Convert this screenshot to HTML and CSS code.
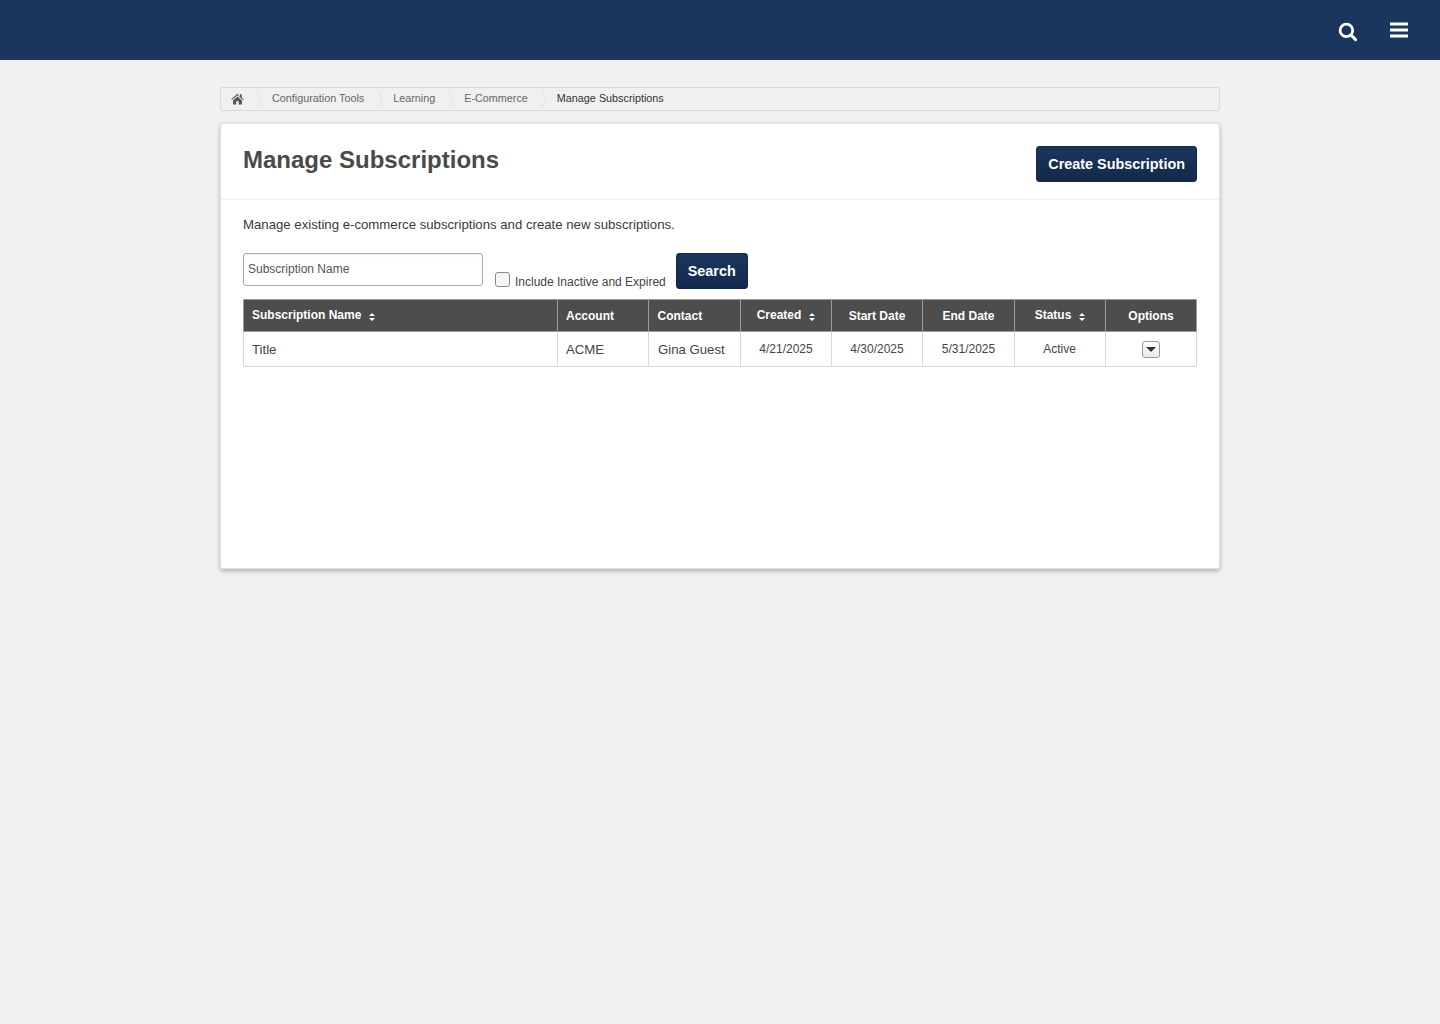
FILE: index.html
```html
<!DOCTYPE html>
<html lang="en">
<head>
<meta charset="utf-8">
<title>Manage Subscriptions</title>
<link rel="stylesheet" href="styles.css">
</head>
<body>
<header class="topbar">
  <svg class="icon-search" viewBox="0 0 20 20" width="20" height="20" aria-label="Search"><circle cx="8.4" cy="8.4" r="6.3" fill="none" stroke="#fff" stroke-width="2.8"/><path d="M13 13L17.6 17.6" stroke="#fff" stroke-width="3" stroke-linecap="round"/></svg>
  <svg class="icon-menu" viewBox="0 0 18 16" width="18" height="16" aria-label="Menu"><path d="M0 0.5h18v3H0zM0 6.5h18v3H0zM0 12.5h18v3H0z" fill="#fff"/></svg>
</header>
<div class="wrapper">
  <nav class="breadcrumb">
    <span class="crumb crumb-home"><svg viewBox="0 0 14 12" width="13" height="12" aria-label="Home"><path d="M7 0.3L0.2 6.3l.8.9L7 2l6 5.2.8-.9-2.3-2V1h-1.8v2.6zM2.2 7.6V12h3.4V8.4h2.8V12h3.4V7.6L7 3.4z" fill="#555"/></svg></span>
    <span class="crumb">Configuration Tools</span>
    <span class="crumb">Learning</span>
    <span class="crumb">E-Commerce</span>
    <span class="crumb crumb-last">Manage Subscriptions</span>
  </nav>
  <main class="card">
    <div class="card-head">
      <h1>Manage Subscriptions</h1>
      <button class="btn btn-create" type="button">Create Subscription</button>
    </div>
    <div class="card-body">
      <p class="intro">Manage existing e-commerce subscriptions and create new subscriptions.</p>
      <form class="filters">
        <input class="name-input" type="text" placeholder="Subscription Name">
        <label class="check-label"><span class="check"></span>Include Inactive and Expired</label>
        <button class="btn btn-search" type="button">Search</button>
      </form>
      <table class="grid">
        <colgroup>
          <col class="c-name"><col class="c-acct"><col class="c-contact"><col class="c-date"><col class="c-date"><col class="c-end"><col class="c-date"><col class="c-opt">
        </colgroup>
        <thead>
          <tr>
            <th class="left sortable">Subscription Name<svg class="sort" viewBox="0 0 6 8" width="6" height="8"><path d="M3 0l3 3H0zM3 8L0 5h6z" fill="#fff"/></svg></th>
            <th class="left">Account</th>
            <th class="left contact">Contact</th>
            <th class="sortable">Created<svg class="sort" viewBox="0 0 6 8" width="6" height="8"><path d="M3 0l3 3H0zM3 8L0 5h6z" fill="#fff"/></svg></th>
            <th>Start Date</th>
            <th>End Date</th>
            <th class="sortable">Status<svg class="sort" viewBox="0 0 6 8" width="6" height="8"><path d="M3 0l3 3H0zM3 8L0 5h6z" fill="#fff"/></svg></th>
            <th>Options</th>
          </tr>
        </thead>
        <tbody>
          <tr>
            <td class="left big">Title</td>
            <td class="left big">ACME</td>
            <td class="left big contact">Gina Guest</td>
            <td>4/21/2025</td>
            <td>4/30/2025</td>
            <td>5/31/2025</td>
            <td class="status">Active</td>
            <td><span class="opt-btn"><span class="opt-arrow"></span></span></td>
          </tr>
        </tbody>
      </table>
    </div>
  </main>
</div>
</body>
</html>
```

FILE: styles.css
```css
* { box-sizing: border-box; }
html, body { margin: 0; padding: 0; }
body {
  min-height: 1024px;
  background: #f1f1f1;
  font-family: "Liberation Sans", Arial, sans-serif;
  color: #333;
}
.topbar {
  height: 60px;
  background: #1b365d;
  display: flex;
  align-items: center;
  justify-content: flex-end;
  padding-right: 32px;
}
.icon-search { margin-right: 32px; margin-top: 3px; }
.wrapper {
  width: 1000px;
  margin: 27px auto 0;
}
.breadcrumb {
  height: 24px;
  border: 1px solid #d9d9d9;
  border-radius: 2px;
  background: #f0f0f0;
  display: flex;
  align-items: center;
  font-size: 10.8px;
  line-height: 20px;
  color: #666;
  padding: 0 0 2px 10px;
}
.crumb {
  position: relative;
  padding-right: 29px;
  white-space: nowrap;
}
.crumb::after {
  content: "";
  position: absolute;
  right: 9px;
  top: 50%;
  width: 11px;
  height: 11px;
  margin-top: -5px;
  border-top: 1px solid #dedede;
  border-right: 1px solid #dedede;
  transform: scaleX(0.55) rotate(45deg);
}
.crumb-home { display: flex; align-items: center; height: 20px; padding: 1px 28px 0 0; }
.crumb-last { color: #333; }
.crumb-last::after { display: none; }
.card {
  margin-top: 12px;
  height: 446px;
  background: #fff;
  border: 1px solid #e2e2e2;
  border-radius: 3px;
  box-shadow: 0 2px 4px rgba(0,0,0,.28);
}
.card-head {
  height: 76px;
  border-bottom: 1px solid #efefef;
  display: flex;
  justify-content: space-between;
  align-items: flex-start;
  padding: 22px 22px 0;
}
h1 {
  margin: 0;
  font-size: 24px;
  line-height: 28px;
  font-weight: 700;
  color: #4a4a4a;
}
.btn {
  border: 1px solid #16294a;
  border-radius: 3px;
  background: linear-gradient(#1b365d, #14284b);
  color: #fff;
  font-family: inherit;
  font-size: 14.4px;
  font-weight: 700;
  height: 36px;
  padding: 0 11px;
  cursor: pointer;
}
.card-body { padding: 0 22px; }
.intro {
  margin: 17px 0 0;
  font-size: 13.2px;
  line-height: 16px;
  color: #3a3a3a;
}
.filters {
  display: flex;
  align-items: flex-start;
  margin-top: 20px;
}
.name-input {
  width: 240px;
  height: 33px;
  border: 1px solid #aaa;
  border-radius: 3px;
  padding: 0 4px 2px;
  font-family: inherit;
  font-size: 12px;
  background: #fff;
  box-shadow: inset 0 1px 2px rgba(0,0,0,.08);
}
.name-input::placeholder { color: #555; opacity: 1; }
.check-label {
  display: flex;
  align-items: flex-start;
  height: 17px;
  margin-left: 12px;
  margin-top: 19px;
  font-size: 12px;
  line-height: 20px;
  color: #444;
}
.check {
  width: 15px;
  height: 15px;
  margin-right: 5px;
  border: 1px solid #888;
  border-radius: 3px;
  background: #f6f6f6;
}
.btn-search { margin-left: 10px; }
.grid {
  margin-top: 10px;
  width: 954px;
  table-layout: fixed;
  border-collapse: collapse;
  font-size: 12px;
}
.c-name { width: 314px; }
.c-acct { width: 91px; }
.c-contact { width: 92px; }
.c-date { width: 91px; }
.c-end { width: 92px; }
.c-opt { width: 91px; }
th {
  height: 32px;
  background: #4d4d4d;
  color: #fff;
  font-size: 12px;
  font-weight: 700;
  text-align: center;
  border: 1px solid #9a9a9a;
  padding: 1px 8px 0;
  white-space: nowrap;
}
th.sortable { padding-top: 0; padding-bottom: 2px; }
td {
  height: 35px;
  border: 1px solid #d9d9d9;
  text-align: center;
  padding: 0 8px;
  color: #444;
  white-space: nowrap;
}
th.left, td.left { text-align: left; }
td.contact { padding-left: 9px; padding-right: 0; }
th.contact { padding-left: 8.5px; padding-right: 0; }
td.status { padding-right: 9px; }
.big { font-size: 13.2px; }
.sort { margin-left: 8px; vertical-align: -2px; }
.opt-btn {
  display: inline-flex;
  align-items: center;
  justify-content: center;
  width: 18px;
  height: 17px;
  border: 1px solid #999;
  border-radius: 3px;
  background: linear-gradient(#fff, #e8e8e8);
  vertical-align: middle;
}
.opt-arrow {
  width: 0;
  height: 0;
  border-left: 5px solid transparent;
  border-right: 5px solid transparent;
  border-top: 5px solid #333;
}
```
